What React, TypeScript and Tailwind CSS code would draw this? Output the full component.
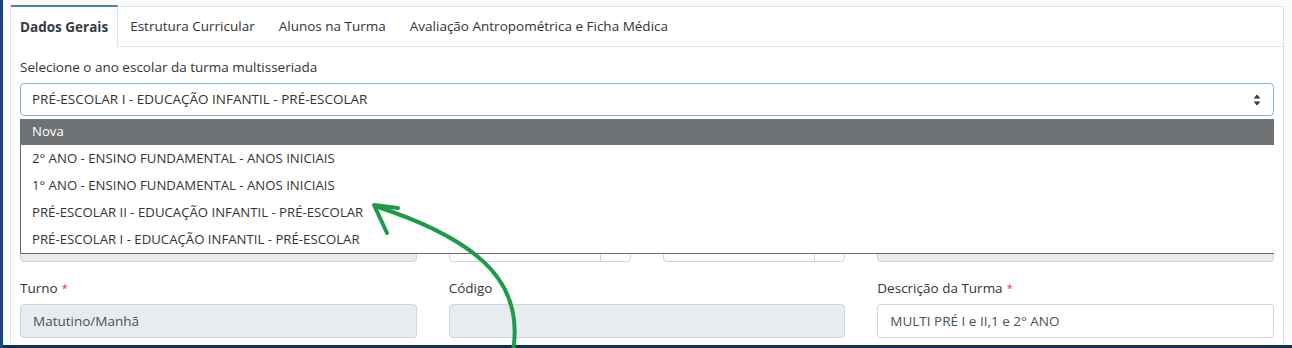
import React from "react";

const font = { fontFamily: '"Open Sans", "Noto Sans", sans-serif' };

const options = [
  "2° ANO - ENSINO FUNDAMENTAL - ANOS INICIAIS",
  "1° ANO - ENSINO FUNDAMENTAL - ANOS INICIAIS",
  "PRÉ-ESCOLAR II - EDUCAÇÃO INFANTIL - PRÉ-ESCOLAR",
  "PRÉ-ESCOLAR I - EDUCAÇÃO INFANTIL - PRÉ-ESCOLAR",
];

function Required() {
  return <span className="ml-1 text-[#e3342f] text-[11px] align-top">*</span>;
}

function Field({ value, disabled }: { value?: string; disabled?: boolean }) {
  return (
    <div
      className={`h-[34px] rounded border border-[#ced4da] px-3 flex items-center text-[13.5px] text-[#495057] ${
        disabled ? "bg-[#e9ecef]" : "bg-white"
      }`}
    >
      {value}
    </div>
  );
}

function DateField() {
  return (
    <div className="h-[34px] rounded border border-[#ced4da] bg-white flex">
      <div className="flex-1" />
      <div className="w-[30px] border-l border-[#ced4da] flex items-end justify-center pb-[8px]">
        <div className="w-[10px] h-[10px] rounded-[2px] bg-[#6c757d]" />
      </div>
    </div>
  );
}

function SortIcon() {
  return (
    <svg width="8" height="12" viewBox="0 0 8 12">
      <path d="M4 0.5 L7.5 4.5 H0.5 Z" fill="#343a40" />
      <path d="M4 11.5 L7.5 7.5 H0.5 Z" fill="#343a40" />
    </svg>
  );
}

export default function App() {
  return (
    <div
      className="relative w-[1292px] h-[348px] overflow-hidden bg-[#fbfbfc] border-l-[3px] border-[#1c4a78]"
      style={font}
    >
      <div className="pl-[7px] pr-[8px] pt-[6px]">
        <div className="bg-white border-l border-r border-t border-[#dee2e6] h-[400px]">
          {/* tabs */}
          <div className="flex h-[40px] border-b border-[#dee2e6] text-[13.5px] text-[#333]">
            <div className="-mt-[2px] -mb-px h-[42px] px-[9px] flex items-center bg-white border-t-2 border-r border-t-[#4e7fae] border-r-[#dee2e6] font-bold text-[#343a40]">
              Dados Gerais
            </div>
            <div className="px-3 flex items-center">Estrutura Curricular</div>
            <div className="px-3 flex items-center">Alunos na Turma</div>
            <div className="px-3 flex items-center">
              Avaliação Antropométrica e Ficha Médica
            </div>
          </div>

          {/* body */}
          <div className="px-[9px] pt-[10px] text-[13.5px] text-[#333]">
            <div className="relative">
              <div className="h-5 leading-5">
                Selecione o ano escolar da turma multisseriada
              </div>
              <div className="mt-[6px] h-[33px] rounded border border-[#86b3dc] bg-white flex items-center pl-[11px] pr-[12px] text-[#333]">
                <span className="flex-1">
                  PRÉ-ESCOLAR I - EDUCAÇÃO INFANTIL - PRÉ-ESCOLAR
                </span>
                <SortIcon />
              </div>

              {/* hidden rows under the open list */}
              <div className="mt-[10px] grid grid-cols-3 gap-x-8">
                <div>
                  <div className="h-5" />
                  <div className="mt-[6px]">
                    <Field disabled />
                  </div>
                </div>
                <div>
                  <div className="h-5" />
                  <div className="mt-[6px]">
                    <Field />
                  </div>
                </div>
                <div>
                  <div className="h-5" />
                  <div className="mt-[6px]">
                    <Field />
                  </div>
                </div>
              </div>
              <div className="mt-4 grid grid-cols-3 gap-x-8">
                <div>
                  <div className="h-5" />
                  <div className="mt-[6px]">
                    <Field disabled />
                  </div>
                </div>
                <div className="grid grid-cols-2 gap-x-8">
                  <div>
                    <div className="h-5" />
                    <div className="mt-[6px]">
                      <DateField />
                    </div>
                  </div>
                  <div>
                    <div className="h-5" />
                    <div className="mt-[6px]">
                      <DateField />
                    </div>
                  </div>
                </div>
                <div>
                  <div className="h-5" />
                  <div className="mt-[6px]">
                    <Field disabled />
                  </div>
                </div>
              </div>

              <div className="mt-4 grid grid-cols-3 gap-x-8">
                <div>
                  <div className="h-5 leading-5">
                    Turno
                    <Required />
                  </div>
                  <div className="mt-[6px]">
                    <Field value="Matutino/Manhã" disabled />
                  </div>
                </div>
                <div>
                  <div className="h-5 leading-5">Código</div>
                  <div className="mt-[6px]">
                    <Field disabled />
                  </div>
                </div>
                <div>
                  <div className="h-5 leading-5">
                    Descrição da Turma
                    <Required />
                  </div>
                  <div className="mt-[6px]">
                    <Field value="MULTI PRÉ I e II,1 e 2° ANO" />
                  </div>
                </div>
              </div>

              {/* open dropdown list */}
              <div className="absolute left-0 right-0 top-[62px] bg-white border-l border-b border-[#6a6a6a] text-[13.2px] text-[#333]">
                <div className="h-[26px] flex items-center pl-[11px] bg-[#707376] text-white">
                  Nova
                </div>
                {options.map((o) => (
                  <div key={o} className="h-[27px] flex items-center pl-[11px]">
                    {o}
                  </div>
                ))}
              </div>
            </div>
          </div>
        </div>
      </div>

      <div className="absolute left-0 right-0 bottom-0 h-[3px] bg-[#0f2f5c]" />

      {/* hand-drawn arrow */}
      <svg
        className="absolute left-[-3px] top-0 pointer-events-none"
        width="1292"
        height="348"
        viewBox="0 0 1292 348"
      >
        <g fill="none" stroke="#1f9a48" strokeWidth="4" strokeLinecap="round" strokeLinejoin="round">
          <path d="M513 352 C523 290 492 244 375 206" />
          <path d="M398 208 L374 205 L387 233" />
        </g>
      </svg>
    </div>
  );
}
